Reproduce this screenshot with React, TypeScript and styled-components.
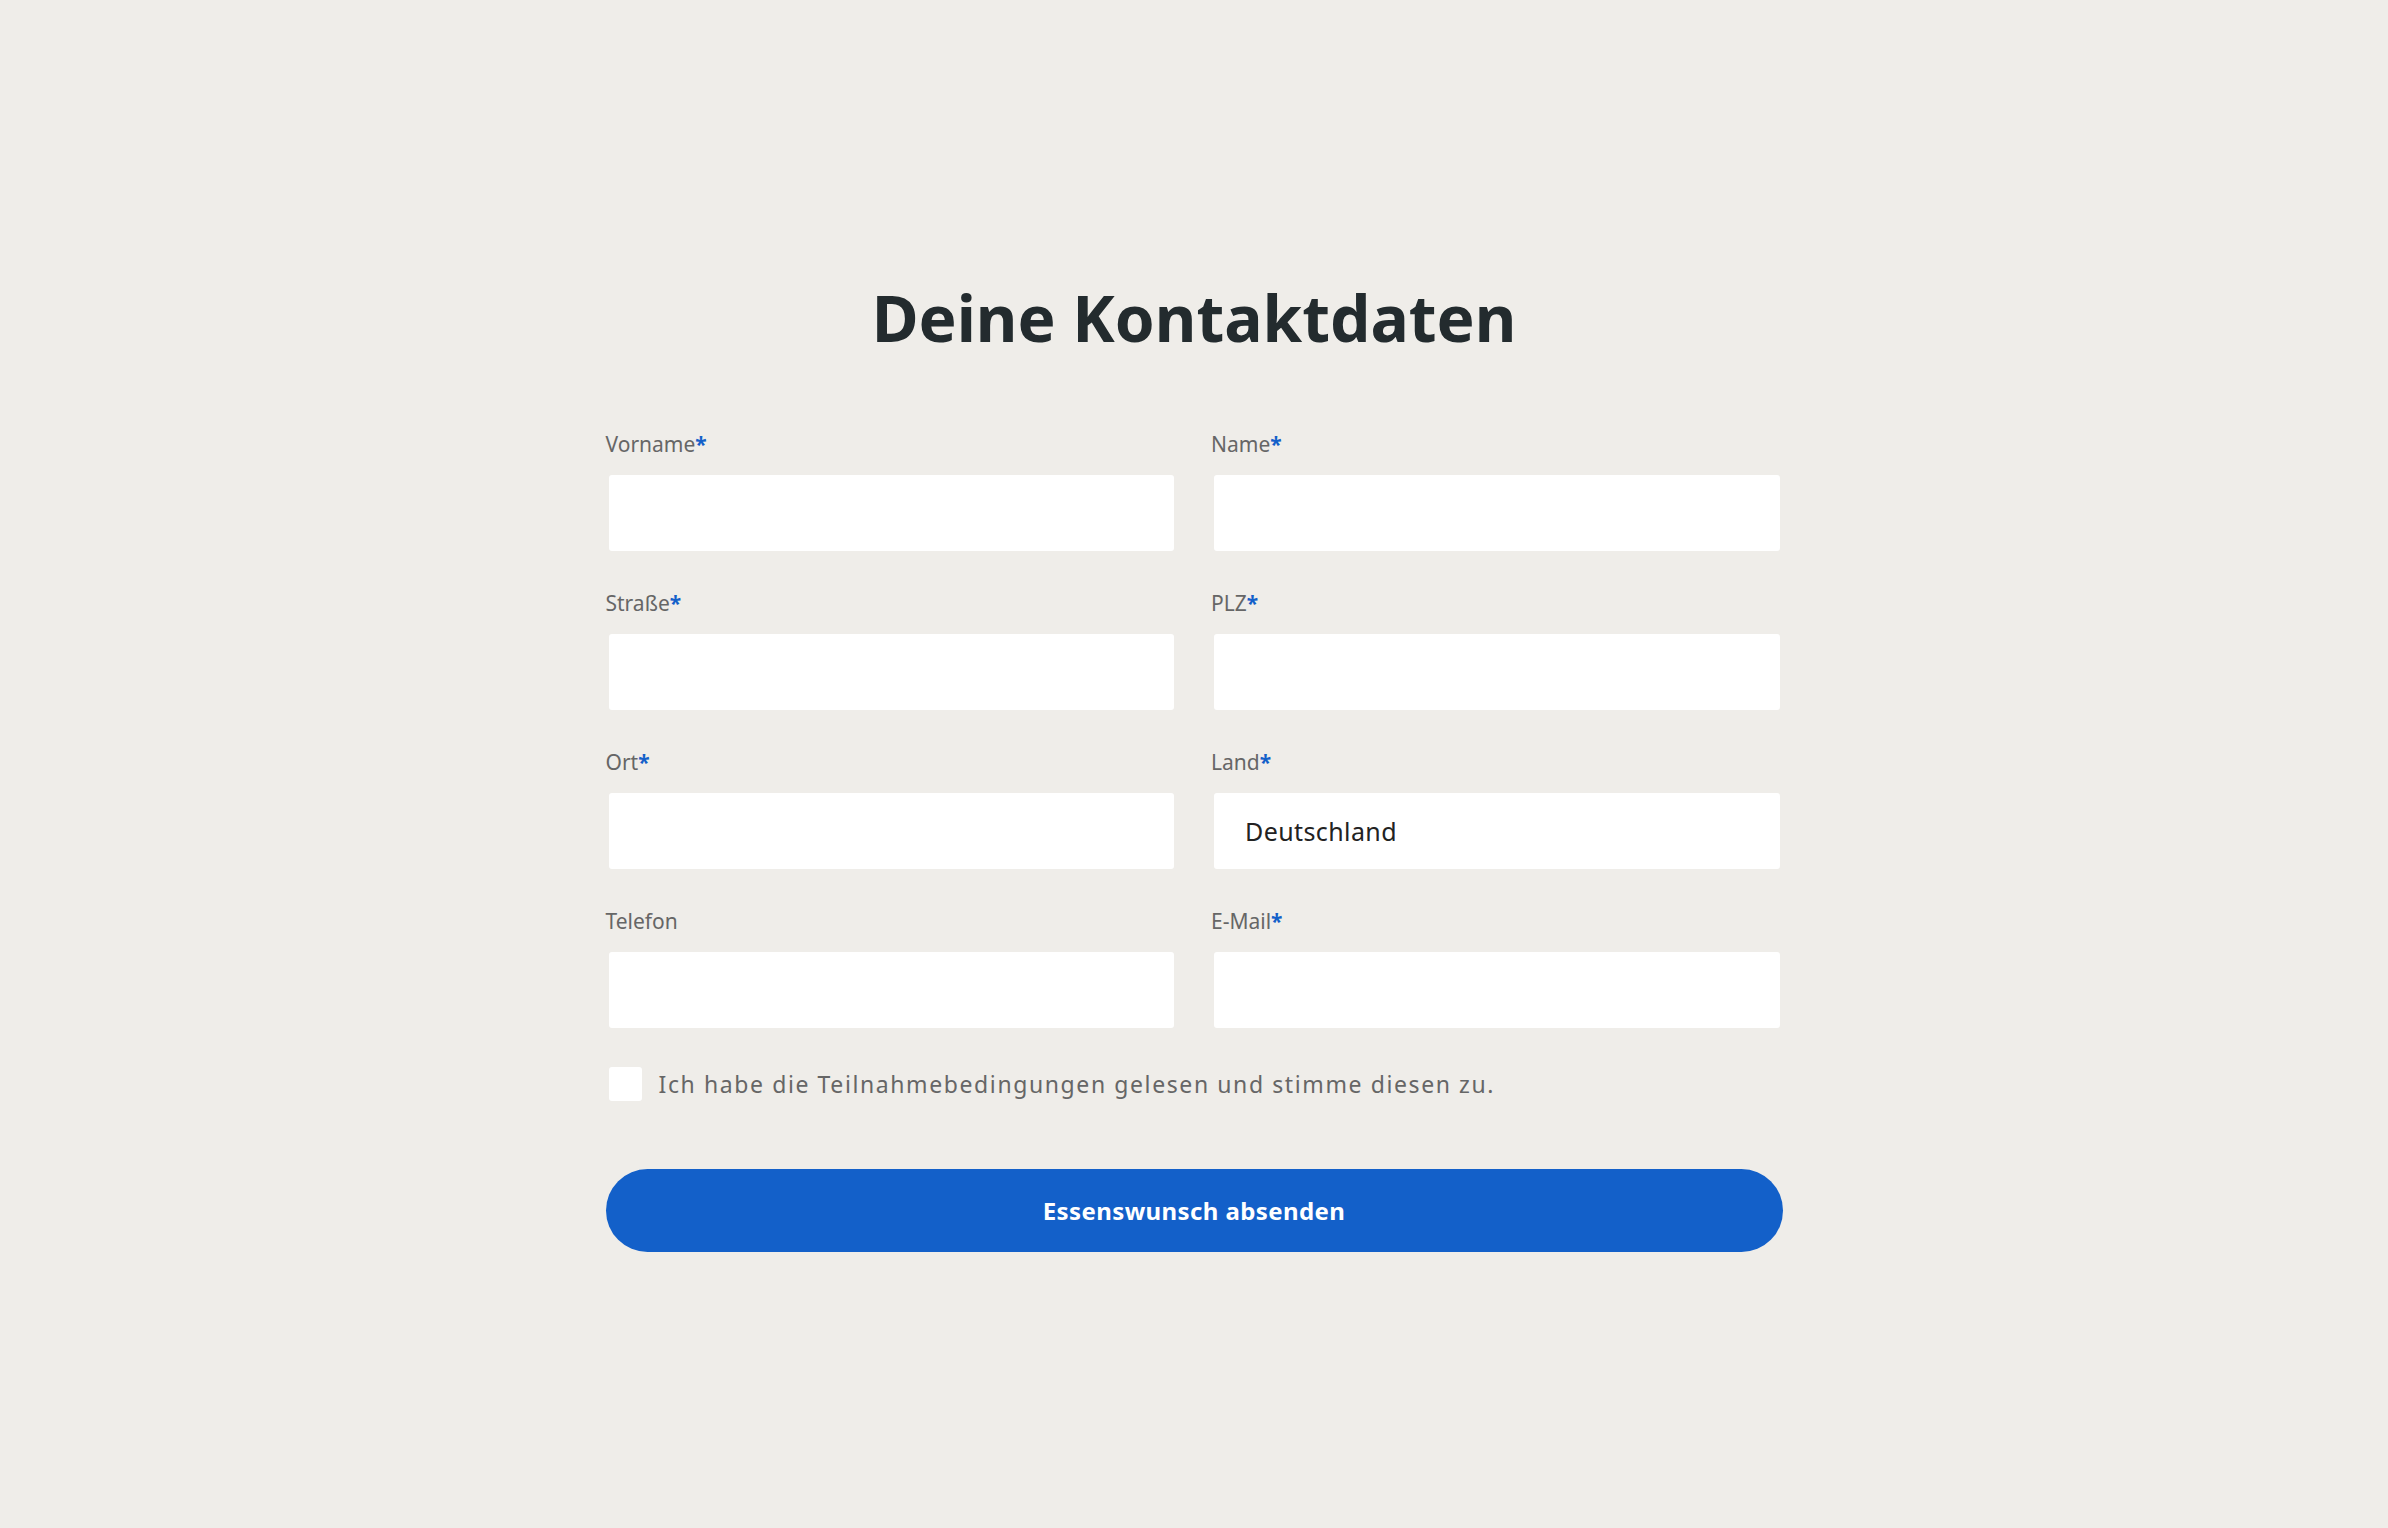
import React from "react";
import styled, { createGlobalStyle } from "styled-components";

const GlobalStyle = createGlobalStyle`
  html, body {
    margin: 0;
    padding: 0;
    background: #efede9;
  }
  * {
    box-sizing: border-box;
  }
`;

const fields = [
  { id: "vorname", label: "Vorname", required: true },
  { id: "name", label: "Name", required: true },
  { id: "strasse", label: "Straße", required: true },
  { id: "plz", label: "PLZ", required: true },
  { id: "ort", label: "Ort", required: true },
  { id: "land", label: "Land", required: true, value: "Deutschland" },
  { id: "telefon", label: "Telefon", required: false },
  { id: "email", label: "E-Mail", required: true },
];

const App = () => {
  return (
    <>
      <GlobalStyle />
      <Page>
        <Form onSubmit={(e) => e.preventDefault()}>
          <Title>Deine Kontaktdaten</Title>
          <FieldGrid>
            {fields.map((f) => (
              <Field key={f.id}>
                <Label htmlFor={f.id}>
                  {f.label}
                  {f.required && <Star>*</Star>}
                </Label>
                <Input id={f.id} defaultValue={f.value} />
              </Field>
            ))}
          </FieldGrid>
          <CheckRow>
            <CheckBox type="checkbox" />
            <CheckText>Ich habe die Teilnahmebedingungen gelesen und stimme diesen zu.</CheckText>
          </CheckRow>
          <SubmitButton type="submit">Essenswunsch absenden</SubmitButton>
        </Form>
      </Page>
    </>
  );
};

export default App;

const Page = styled.div`
  min-height: 100vh;
  background: #efede9;
  font-family: "Noto Sans", "Open Sans", sans-serif;
`;

const Form = styled.form`
  width: 1177px;
  margin: 0 auto;
  padding-top: 273px;
  display: flex;
  flex-direction: column;
`;

const Title = styled.h1`
  margin: 0 0 67px;
  text-align: center;
  font-family: "Noto Sans", sans-serif;
  font-size: 64px;
  font-weight: 700;
  line-height: 90px;
  color: #232b2e;
`;

const FieldGrid = styled.div`
  display: grid;
  grid-template-columns: 1fr 1fr;
  column-gap: 34px;
  row-gap: 38px;
`;

const Field = styled.div`
  display: flex;
  flex-direction: column;
  gap: 17px;
`;

const Label = styled.label`
  font-size: 21px;
  line-height: 28px;
  color: #666666;
`;

const Star = styled.span`
  color: #1360c9;
  font-weight: 700;
`;

const Input = styled.input`
  margin: 0 3px;
  height: 76px;
  border: none;
  border-radius: 3px;
  background: #ffffff;
  padding: 0 31px;
  font-family: "Noto Sans", sans-serif;
  font-size: 25px;
  letter-spacing: 0.4px;
  color: #222222;
  outline: none;
`;

const CheckRow = styled.label`
  display: flex;
  align-items: center;
  gap: 17px;
  margin: 39px 0 0 3px;
`;

const CheckBox = styled.input`
  appearance: none;
  margin: 0;
  width: 33px;
  height: 34px;
  border-radius: 3px;
  background: #ffffff;
`;

const CheckText = styled.span`
  font-size: 23px;
  letter-spacing: 1.6px;
  color: #666666;
`;

const SubmitButton = styled.button`
  margin-top: 68px;
  height: 83px;
  border: none;
  border-radius: 42px;
  background: #1360c9;
  color: #ffffff;
  font-family: "Noto Sans", sans-serif;
  font-size: 24px;
  font-weight: 700;
  letter-spacing: 0.4px;
  cursor: pointer;
`;
